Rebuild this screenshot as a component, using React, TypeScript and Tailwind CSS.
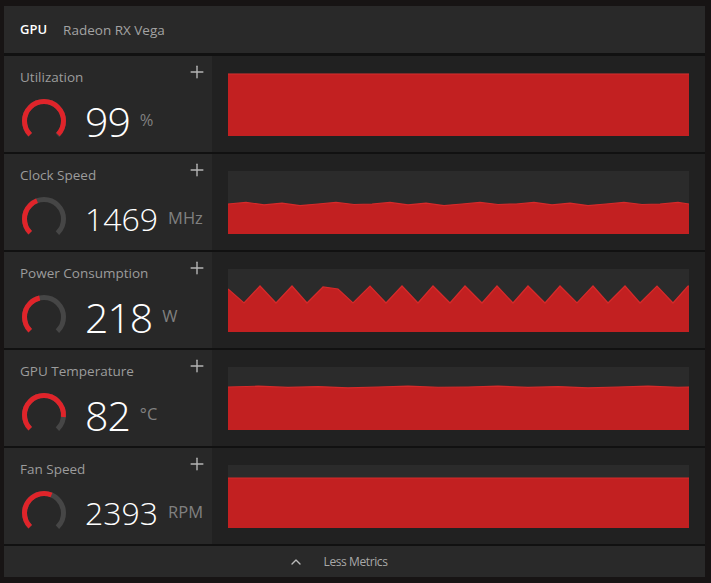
import { Plus, ChevronUp } from "lucide-react";

type Metric = {
  label: string;
  value: string;
  unit: string;
  gauge: number;
  points: [number, number][];
};

const W = 461;
const H = 63;

// little helper for a wobbly line around a level
function wobble(level: number, amp: number, step: number): [number, number][] {
  const pts: [number, number][] = [];
  let i = 0;
  for (let x = 0; x <= W; x += step) {
    const d = [0, -1, 0.5, -0.5, 1, 0, -1, 0.3][i % 8] * amp;
    pts.push([x, level + d]);
    i++;
  }
  pts.push([W, level]);
  return pts;
}

const powerPeaks = [32, 64, 142, 174, 205, 237, 269, 300, 332, 365, 397, 429, 460];
const powerTroughs = [16, 48, 79, 125, 158, 190, 222, 254, 285, 317, 349, 380, 412, 445];

function powerLine(): [number, number][] {
  const pts: [number, number][] = [[0, 20]];
  powerPeaks.forEach((x) => pts.push([x, 17]));
  powerTroughs.forEach((x) => pts.push([x, 34]));
  pts.push([95, 18], [110, 20]);
  pts.push([W, 17]);
  return pts.sort((a, b) => a[0] - b[0]);
}

const METRICS: Metric[] = [
  { label: "Utilization", value: "99", unit: "%", gauge: 0.99, points: [[0, 1], [W, 1]] },
  { label: "Clock Speed", value: "1469", unit: "MHz", gauge: 0.42, points: wobble(33, 1.6, 18) },
  { label: "Power Consumption", value: "218", unit: "W", gauge: 0.45, points: powerLine() },
  { label: "GPU Temperature", value: "82", unit: "°C", gauge: 0.85, points: wobble(20, 0.8, 30) },
  { label: "Fan Speed", value: "2393", unit: "RPM", gauge: 0.58, points: [[0, 13], [W, 13]] },
];

function Gauge({ frac }: { frac: number }) {
  const r = 19.5;
  const c = 2 * Math.PI * r;
  const arc = c * 0.75;
  return (
    <svg width="48" height="48" viewBox="0 0 48 48" className="shrink-0">
      <circle
        cx="24"
        cy="24"
        r={r}
        fill="none"
        stroke="#464646"
        strokeWidth="5"
        strokeDasharray={`${arc} ${c}`}
        transform="rotate(135 24 24)"
      />
      <circle
        cx="24"
        cy="24"
        r={r}
        fill="none"
        stroke="#e0242a"
        strokeWidth="5"
        strokeDasharray={`${arc * frac} ${c}`}
        transform="rotate(135 24 24)"
      />
    </svg>
  );
}

function Chart({ points }: { points: [number, number][] }) {
  const line = points.map(([x, y]) => `${x},${y}`).join(" ");
  return (
    <svg width={W} height={H} viewBox={`0 0 ${W} ${H}`} preserveAspectRatio="none" className="block">
      <rect width={W} height={H} fill="#2b2b2b" />
      <polygon points={`0,${H} ${line} ${W},${H}`} fill="#c22021" />
      <polyline points={line} fill="none" stroke="#d62a2a" strokeWidth="1.2" />
    </svg>
  );
}

export default function App() {
  return (
    <div
      className="w-[711px] h-[583px] bg-[#171414] pt-[6px] px-[4px]"
      style={{ fontFamily: '"Open Sans", "Noto Sans", sans-serif' }}
    >
      <div className="w-[701px] flex flex-col gap-[2px] bg-[#111111]">
        {/* Header */}
        <div className="h-[47px] mb-[1px] bg-[#292929] flex items-center gap-[16px] px-4 pt-[1px] text-[13.5px]">
          <span className="text-white font-semibold text-[13px]">GPU</span>
          <span className="text-[#a3a3a3]">Radeon RX Vega</span>
        </div>

        {METRICS.map((m) => (
          <div key={m.label} className="h-[96px] flex">
            <div className="w-[208px] bg-[#282828] relative px-4 pt-[13px]">
              <div className="text-[13.5px] leading-4 text-[#9c9c9c]">{m.label}</div>
              <Plus className="absolute right-[5px] top-[6px] w-[20px] h-[20px] text-[#b4b4b4]" strokeWidth={1.7} />
              <div className="flex items-center mt-[12px] h-[48px]">
                <Gauge frac={m.gauge} />
                <span
                  className={
                    m.value.length > 3
                      ? "ml-[17px] text-[32px] leading-[48px] font-light text-white"
                      : "ml-[17px] text-[41px] leading-[48px] font-light text-white tracking-[-1px]"
                  }
                >
                  {m.value}
                </span>
                <span className="ml-[10px] mt-[-1px] text-[16.5px] text-[#808080]">{m.unit}</span>
              </div>
            </div>
            <div className="flex-1 bg-[#212121] pl-[16px] pt-[17px]">
              <Chart points={m.points} />
            </div>
          </div>
        ))}

        {/* Footer */}
        <div className="h-[31px] bg-[#292929] flex items-center justify-center gap-[20px] text-[12px] text-[#a8a8a8]">
          <ChevronUp className="w-4 h-4 text-[#bbbbbb] ml-[-34px]" strokeWidth={2} />
          <span className="tracking-[-0.4px]">Less Metrics</span>
        </div>
      </div>
    </div>
  );
}
